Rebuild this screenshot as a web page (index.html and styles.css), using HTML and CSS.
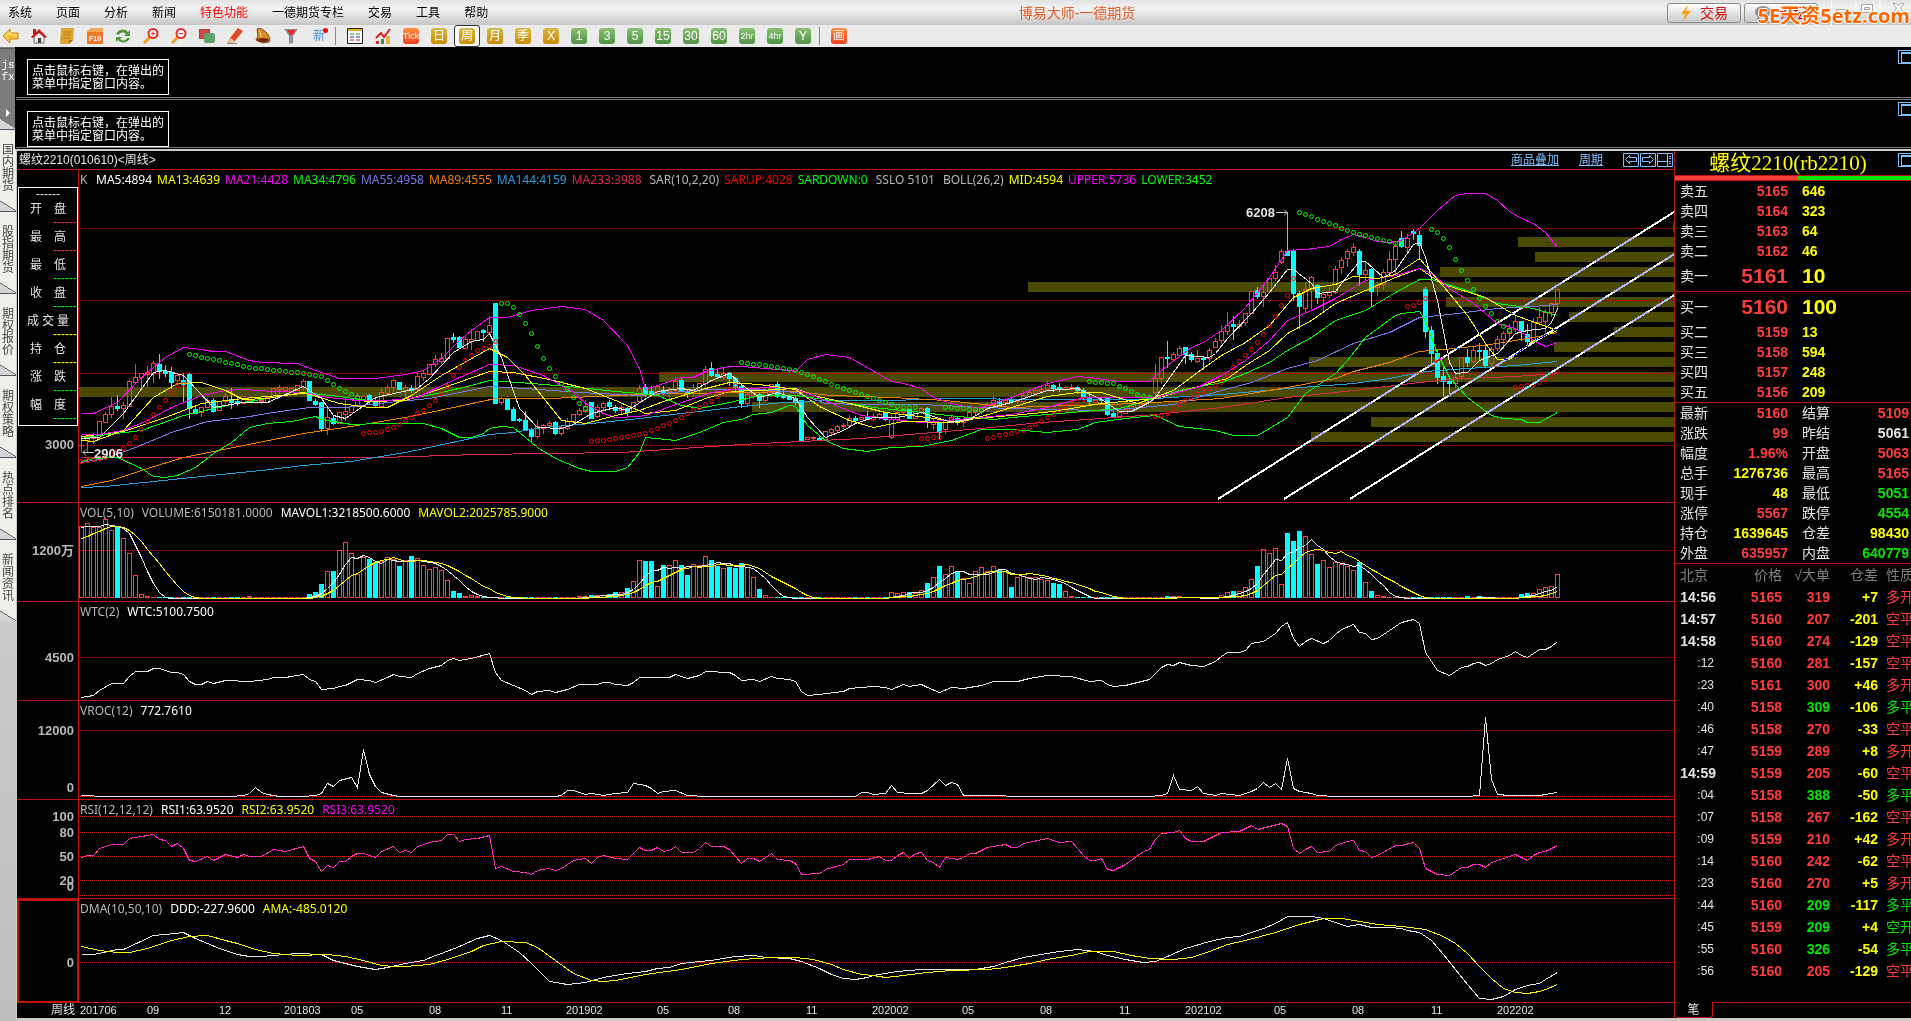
FILE: index.html
```html
<!DOCTYPE html>
<html lang="zh-CN">
<head>
<meta charset="utf-8">
<title>博易大师-一德期货</title>
<link rel="stylesheet" href="styles.css">
</head>
<body>
<header class="menubar">
  <nav class="menu">
    <a href="#">系统</a><a href="#">页面</a><a href="#">分析</a><a href="#">新闻</a><a href="#" class="hot">特色功能</a><a href="#">一德期货专栏</a><a href="#">交易</a><a href="#">工具</a><a href="#">帮助</a>
  </nav>
  <h1 class="app-title">博易大师-一德期货</h1>
  <div class="window-tools">
    <button class="pill"><svg width="12" height="16" viewBox="0 0 12 16"><path d="M8 0 1 9h4L3 16 11 6H6z" fill="#f8a020"/></svg>交易</button>
    <button class="pill"><svg width="16" height="14" viewBox="0 0 16 14"><ellipse cx="8" cy="6" rx="8" ry="6" fill="#8a8f94"/><path d="M3 9l-1 5 5-3z" fill="#8a8f94"/></svg>论坛</button>
    <svg class="win-icons" width="80" height="24" viewBox="0 0 80 24"><g fill="none" stroke="#fff"><path d="M.5 0v24M25 0v24M49 0v24"/></g><g fill="#fff" stroke="#a8a8a8"><path d="M5.500 8.500h11v3h-11z"/><path d="M30.500 3.500h11v8h-11z"/><path d="M33.500 6.500h5v2h-5z"/><path d="M62 2.500h3.500l2 2.500 2-2.500H73L69.500 7 73 12.500h-3.500l-2-3-2 3H62L65.500 7z"/></g></svg>
  </div>
  <div class="watermark">5E天资5etz.com</div>
</header>

<div class="toolbar" role="toolbar">
  <button aria-label="后退"><svg viewBox="0 0 16 16"><path d="M0 8 7 1v4h8v6H7v4z" fill="#f8c438" stroke="#c88a10"/><path d="M3 8l4-4v2.500h7" fill="none" stroke="#fff0a0"/></svg></button>
  <button aria-label="主页"><svg viewBox="0 0 16 16"><path d="M3 8v7h10V8L8 4z" fill="#e8e8ee" stroke="#777"/><path d="M0 9 8 1l8 8-2 1-6-5-6 5z" fill="#c01c1c"/><path d="M2 1h3v4L2 7z" fill="#b02020"/><path d="M7 10h3v5H7z" fill="#444"/></svg></button>
  <button aria-label="记事"><svg viewBox="0 0 16 16"><path d="M2 0h13l-1 12-4 4H1z" fill="#e0a430"/><path d="M10 16v-4h4z" fill="#a86a10"/><path d="M4 4h9M4 7h8M3 10h8" stroke="#b87814"/></svg></button>
  <button aria-label="F10资料"><svg viewBox="0 0 16 16"><rect y="3" width="16" height="13" rx="1" fill="#f07828"/><path d="M0 3 4 0h12v4H0z" fill="#f8a850"/><text x="2" y="13" class="ic-f10">F10</text></svg></button>
  <button aria-label="刷新"><svg viewBox="0 0 16 16"><path d="M1 6c2-5 9-6 12-2l2-2v6H9l2-2C9 4 5 4 4 7zM15 10c-2 5-9 6-12 2l-2 2V9h6l-2 2c2 2 6 2 7-1z" fill="#4c9c38"/></svg></button>
  <button aria-label="放大"><svg viewBox="0 0 16 16"><path d="M1 15l6-6" stroke="#f0a020" stroke-width="3"/><circle cx="10" cy="5.500" r="4.500" fill="#fff" stroke="#e03028" stroke-width="2"/><path d="M8 5.500h4M10 3.500v4" stroke="#e03028"/></svg></button>
  <button aria-label="缩小"><svg viewBox="0 0 16 16"><path d="M1 15l6-6" stroke="#f0a020" stroke-width="3"/><circle cx="10" cy="5.500" r="4.500" fill="#fff" stroke="#e03028" stroke-width="2"/><path d="M8 5.500h4" stroke="#e03028"/></svg></button>
  <button aria-label="叠加"><svg viewBox="0 0 16 16"><rect x=".5" y="1.500" width="10" height="9" fill="#d04848" stroke="#b04040"/><rect x="5.500" y="5.500" width="10" height="9" rx="1" fill="#58a868" stroke="#6a9a78"/></svg></button>
  <button aria-label="画笔"><svg viewBox="0 0 16 16"><path d="M11 0l5 3-8 10-5-3z" fill="#e04828"/><path d="M3 10l5 3-7 3z" fill="#f0c890" stroke="#a07040" stroke-width=".5"/><path d="M0 15.500h10" stroke="#888"/></svg></button>
  <button aria-label="预警"><svg viewBox="0 0 16 16"><path d="M2 1l3-1 6 4c2 2 2 4 4 6l-1 4-6 1-7-3 2-4z" fill="#d88c2c" stroke="#884410"/><ellipse cx="8" cy="12" rx="6" ry="2" fill="#702c0c"/><path d="M5 3l1 6" stroke="#ffd880"/></svg></button>
  <button aria-label="筛选"><svg viewBox="0 0 16 16"><path d="M1 1h14L10 8v7l-4 1V8z" fill="#909498"/><path d="M4 2h9l-4 5H7z" fill="#e82828"/></svg></button>
  <button aria-label="新"><span class="new-mark">新</span></button>
  <i class="sep"></i>
  <button aria-label="报价"><svg viewBox="0 0 16 16"><path d="M.5.500h15v15H.5z" fill="#fff" stroke="#222"/><path d="M1 2h14" stroke="#e8b020" stroke-width="2"/><path d="M3 6h4M9 6h4" stroke="#109020"/><path d="M3 9h4M9 9h4" stroke="#2030a0"/><path d="M3 12h4M9 12h4" stroke="#c02020"/></svg></button>
  <button aria-label="走势"><svg viewBox="0 0 16 16"><path d="M1 10 6 5l3 4 6-8" fill="none" stroke="#e02020" stroke-width="2"/><path d="M1 13h3v3H1z" fill="#d03030"/><path d="M6 11h3v5H6z" fill="#20a030"/><path d="M11 8h4v8h-4z" fill="#e8b040"/></svg></button>
  <button><b class="sq red narrow">Tick</b></button><button><b class="sq gold">日</b></button><button class="on"><b class="sq gold">周</b></button><button><b class="sq gold">月</b></button><button><b class="sq gold">季</b></button><button><b class="sq gold">X</b></button><button><b class="sq green">1</b></button><button><b class="sq green">3</b></button><button><b class="sq green">5</b></button><button><b class="sq green">15</b></button><button><b class="sq green">30</b></button><button><b class="sq green">60</b></button><button><b class="sq green narrow">2hr</b></button><button><b class="sq green narrow">4hr</b></button><button><b class="sq green">Y</b></button>
  <i class="sep"></i>
  <button><b class="sq red">画</b></button>
</div>

<div class="workspace">
  <aside class="side">
    <a href="#" class="tab dark"><span>js</span><span>fx</span><i class="play"></i></a>
    <a href="#" class="tab">国内期货</a>
    <a href="#" class="tab">股指期货</a>
    <a href="#" class="tab">期权报价</a>
    <a href="#" class="tab">期权策略</a>
    <a href="#" class="tab">热点排名</a>
    <a href="#" class="tab">新闻资讯</a>
  </aside>

  <main class="content">
    <section class="blank"><p>点击鼠标右键，在弹出的<br>菜单中指定窗口内容。</p><button class="max" aria-label="最大化"></button></section>
    <section class="blank second"><p>点击鼠标右键，在弹出的<br>菜单中指定窗口内容。</p><button class="max" aria-label="最大化"></button></section>

    <div class="desk">
      <section class="chart">
        <div class="chart-head">
          <h2>螺纹2210(010610)&lt;周线&gt;</h2>
          <a href="#">商品叠加</a><a href="#">周期</a>
          <div class="chart-nav">
            <button aria-label="左移"><svg width="16" height="14" viewBox="0 0 16 14"><path d="M.5.500h15v13H.5zM2.500 6.500l4-4v2h7v4h-7v2z"/></svg></button>
            <button aria-label="右移"><svg width="16" height="14" viewBox="0 0 16 14"><path d="M.5.500h15v13H.5zM13.500 6.500l-4-4v2h-7v4h7v2z"/></svg></button>
            <button aria-label="布局"><svg width="16" height="14" viewBox="0 0 16 14"><path d="M.5.500h15v13H.5zM.5 8.500h10M10.500 1v12M12 3.500h2M12 5.500h2M12 8.500h2M12 10.500h2"/></svg></button>
          </div>
        </div>

        <div class="pane pane-k">
          <div class="axis">
            <dl class="ohlc">
              <dt class="time">------</dt>
              <dt><span>开</span><span>盘</span></dt><dd class="r">------</dd>
              <dt><span>最</span><span>高</span></dt><dd class="r">------</dd>
              <dt><span>最</span><span>低</span></dt><dd class="g">------</dd>
              <dt><span>收</span><span>盘</span></dt><dd class="g">------</dd>
              <dt class="three"><span>成</span><span>交</span><span>量</span></dt><dd class="y">------</dd>
              <dt><span>持</span><span>仓</span></dt><dd class="y">------</dd>
              <dt><span>涨</span><span>跌</span></dt><dd class="g">------</dd>
              <dt><span>幅</span><span>度</span></dt><dd class="g">------</dd>
            </dl>
            <span class="lab" style="top:275px">3000</span>
          </div>
          <div class="plot">
            <svg id="k"></svg>
            <p class="legend"><span class="k">K</span><span class="w">MA5:4894</span><span class="y">MA13:4639</span><span class="m">MA21:4428</span><span class="g">MA34:4796</span><span class="b">MA55:4958</span><span class="o">MA89:4555</span><span class="s">MA144:4159</span><span class="c">MA233:3988</span><span class="n">SAR(10,2,20)</span><span class="rd">SARUP:4028</span><span class="g">SARDOWN:0</span><span class="n">SSLO 5101</span><span class="n">BOLL(26,2)</span><span class="y">MID:4594</span><span class="m">UPPER:5736</span><span class="g">LOWER:3452</span></p>
          </div>
        </div>
        <div class="pane">
          <div class="axis"><span class="lab" style="top:48px">1200万</span></div>
          <div class="plot"><svg id="vol"></svg><p class="legend sub"><span>VOL(5,10)</span><span>VOLUME:6150181.0000</span><span class="w">MAVOL1:3218500.6000</span><span class="y">MAVOL2:2025785.9000</span></p></div>
        </div>
        <div class="pane">
          <div class="axis"><span class="lab" style="top:56px">4500</span></div>
          <div class="plot"><svg id="wtc"></svg><p class="legend sub"><span>WTC(2)</span><span class="w">WTC:5100.7500</span></p></div>
        </div>
        <div class="pane">
          <div class="axis"><span class="lab" style="top:30px">12000</span><span class="lab" style="top:87px">0</span></div>
          <div class="plot"><svg id="vroc"></svg><p class="legend sub"><span>VROC(12)</span><span class="w">772.7610</span></p></div>
        </div>
        <div class="pane">
          <div class="axis"><span class="lab" style="top:17px">100</span><span class="lab" style="top:33px">80</span><span class="lab" style="top:57px">50</span><span class="lab" style="top:81px">20</span><span class="lab" style="top:87px">0</span></div>
          <div class="plot"><svg id="rsi"></svg><p class="legend sub"><span>RSI(12,12,12)</span><span class="w">RSI1:63.9520</span><span class="y">RSI2:63.9520</span><span class="m">RSI3:63.9520</span></p></div>
        </div>
        <div class="pane pane-dma">
          <div class="axis picked"><span class="lab" style="top:63px">0</span></div>
          <div class="plot"><svg id="dma"></svg><p class="legend sub"><span>DMA(10,50,10)</span><span class="w">DDD:-227.9600</span><span class="y">AMA:-485.0120</span></p></div>
        </div>
        <div class="dates"><span class="period">周线</span><svg id="dates"></svg></div>
      </section>

      <section class="quote">
        <h2>螺纹2210(rb2210)</h2>
        <button class="max" aria-label="最大化"></button>
        <div class="ratio"><i></i></div>
        <table class="book">
          <tr><th>卖五</th><td>5165</td><td>646</td></tr>
          <tr><th>卖四</th><td>5164</td><td>323</td></tr>
          <tr><th>卖三</th><td>5163</td><td>64</td></tr>
          <tr><th>卖二</th><td>5162</td><td>46</td></tr>
          <tr class="best"><th>卖一</th><td>5161</td><td>10</td></tr>
        </table>
        <table class="book">
          <tr class="best"><th>买一</th><td>5160</td><td>100</td></tr>
          <tr><th>买二</th><td>5159</td><td>13</td></tr>
          <tr><th>买三</th><td>5158</td><td>594</td></tr>
          <tr><th>买四</th><td>5157</td><td>248</td></tr>
          <tr><th>买五</th><td>5156</td><td>209</td></tr>
        </table>
        <table class="stats">
          <tr><th>最新</th><td class="r">5160</td><th>结算</th><td class="r">5109</td></tr>
          <tr><th>涨跌</th><td class="r">99</td><th>昨结</th><td class="w">5061</td></tr>
          <tr><th>幅度</th><td class="r">1.96%</td><th>开盘</th><td class="r">5063</td></tr>
          <tr><th>总手</th><td class="y">1276736</td><th>最高</th><td class="r">5165</td></tr>
          <tr><th>现手</th><td class="y">48</td><th>最低</th><td class="g">5051</td></tr>
          <tr><th>涨停</th><td class="r">5567</td><th>跌停</th><td class="g">4554</td></tr>
          <tr><th>持仓</th><td class="y">1639645</td><th>仓差</th><td class="y">98430</td></tr>
          <tr><th>外盘</th><td class="r">635957</td><th>内盘</th><td class="g">640779</td></tr>
        </table>
        <table class="ticks">
          <thead><tr><th>北京</th><th>价格</th><th>√大单</th><th>仓差</th><th>性质</th></tr></thead>
          <tbody>
            <tr><td>14:56</td><td>5165</td><td>319</td><td>+7</td><td>多开</td></tr>
            <tr><td>14:57</td><td>5160</td><td>207</td><td>-201</td><td>空平</td></tr>
            <tr><td>14:58</td><td>5160</td><td>274</td><td>-129</td><td>空平</td></tr>
            <tr class="sec"><td>:12</td><td>5160</td><td>281</td><td>-157</td><td>空平</td></tr>
            <tr class="sec"><td>:23</td><td>5161</td><td>300</td><td>+46</td><td>多开</td></tr>
            <tr class="sec sell"><td>:40</td><td>5158</td><td>309</td><td>-106</td><td>多平</td></tr>
            <tr class="sec"><td>:46</td><td>5158</td><td>270</td><td>-33</td><td>空平</td></tr>
            <tr class="sec"><td>:47</td><td>5159</td><td>289</td><td>+8</td><td>多开</td></tr>
            <tr><td>14:59</td><td>5159</td><td>205</td><td>-60</td><td>空平</td></tr>
            <tr class="sec sell"><td>:04</td><td>5158</td><td>388</td><td>-50</td><td>多平</td></tr>
            <tr class="sec"><td>:07</td><td>5158</td><td>267</td><td>-162</td><td>空平</td></tr>
            <tr class="sec"><td>:09</td><td>5159</td><td>210</td><td>+42</td><td>多开</td></tr>
            <tr class="sec"><td>:14</td><td>5160</td><td>242</td><td>-62</td><td>空平</td></tr>
            <tr class="sec"><td>:23</td><td>5160</td><td>270</td><td>+5</td><td>多开</td></tr>
            <tr class="sec sell"><td>:44</td><td>5160</td><td>209</td><td>-117</td><td>多平</td></tr>
            <tr class="sec sell"><td>:45</td><td>5159</td><td>209</td><td>+4</td><td>空开</td></tr>
            <tr class="sec sell"><td>:55</td><td>5160</td><td>326</td><td>-54</td><td>多平</td></tr>
            <tr class="sec"><td>:56</td><td>5160</td><td>205</td><td>-129</td><td>空平</td></tr>
          </tbody>
        </table>
        <div class="foot"><button>笔</button><i></i></div>
      </section>
    </div>
  </main>
</div>
<script src="chart.js"></script>
</body>
</html>
```
FILE: styles.css
```css
* { box-sizing: border-box; }

:root {
  --line: #c01408;
  --red: #ff3c3c;
  --green: #00e600;
  --yellow: #ffff00;
  --blue: #80c0ff;
}

body {
  margin: 0;
  min-height: 100vh;
  display: flex;
  flex-direction: column;
  background: #cfc9c7;
  color: #e4e4e4;
  font: 12px/16px "Liberation Sans", "Noto Sans CJK SC", sans-serif;
  overflow: hidden;
}

h1, h2, p, dl, dt, dd { margin: 0; font-weight: normal; }
button { margin: 0; padding: 0; border: 0; background: none; color: inherit; font: inherit; }
a { color: inherit; text-decoration: none; }
svg { display: block; }
table { width: 100%; table-layout: fixed; border-collapse: collapse; }
th, td { padding: 0; font-weight: normal; text-align: right; white-space: nowrap; }

.r { color: var(--red); }
.g { color: #00ff00; }
.y { color: var(--yellow); }
.w { color: #fff; }
.m { color: #ff00ff; }
.b { color: #7878f0; }
.o { color: #f08000; }
.s { color: #28a0dc; }
.c { color: #dc2850; }
.rd { color: #f00000; }

/* menu bar */
.menubar {
  position: relative;
  display: grid;
  grid-template-columns: 1fr auto 1fr;
  align-items: center;
  height: 25px;
  background: linear-gradient(#e2e2e2, #f4f4f4 35%, #c6c6c6);
  color: #000;
}
.menu { display: flex; gap: 24px; padding-left: 8px; }
.menu .hot { color: #f00; }
.app-title { font-size: 14px; color: #e0602c; padding-left: 243px; }
.window-tools { display: flex; gap: 3px; justify-content: flex-end; align-items: center; }
.pill {
  display: flex;
  align-items: center;
  justify-content: center;
  gap: 8px;
  width: 74px;
  height: 20px;
  border: 1px solid #8c8c8c;
  border-radius: 3px;
  background: linear-gradient(#fff, #c8c8c8);
  color: #d80808;
  font-size: 14px;
}
.win-icons { margin-left: 10px; }
.watermark {
  position: absolute;
  right: 1px;
  top: 3px;
  color: #ff6600;
  font: bold 20px/26px "Open Sans", "Noto Sans CJK SC", sans-serif;
  text-shadow: 1px 0 #fff, -1px 0 #fff, 0 1px #fff, 0 -1px #fff;
}

/* toolbar */
.toolbar {
  display: flex;
  align-items: center;
  height: 23px;
  background: #ebebeb;
  border-bottom: 1px solid #7c7c7c;
}
.toolbar button { width: 28px; height: 22px; display: flex; justify-content: center; align-items: center; }
.toolbar button:first-child { width: 25px; padding-right: 3px; }
.toolbar svg { width: 16px; height: 16px; }
.toolbar .on { width: 26px; margin: 0 1px; border: 1px solid #333; border-radius: 3px; background: #fafafa; }
.ic-f10 { font: bold 7px/8px "Liberation Sans", sans-serif; fill: #fff; }
.sep { width: 8px; height: 18px; background: linear-gradient(90deg, transparent 2px, #888 2px, #888 3px, transparent 3px); }
.sq {
  width: 16px;
  height: 16px;
  border-radius: 3px;
  color: #fff;
  font: 12px/16px "Liberation Sans", "Noto Sans CJK SC", sans-serif;
  text-align: center;
}
.sq.narrow { font-size: 9px; }
.gold { background: linear-gradient(#d8b84c, #c88c00); }
.green { background: linear-gradient(#88c070, #509448); }
.red { background: linear-gradient(#ff9040, #f04020); }
.new-mark { position: relative; color: #4090e0; }
.new-mark::after { content: ""; position: absolute; top: 0; right: -3px; width: 5px; height: 5px; border-radius: 50%; background: #f00; }

/* workspace */
.workspace { display: flex; flex: 1; }
.side { width: 16px; flex: none; background: linear-gradient(#dcdcdc, #bebebe); }
.tab {
  position: relative;
  display: block;
  height: 82px;
  padding: 14px 2px 0;
  font-size: 12px;
  line-height: 12px;
  color: #444;
  word-break: break-all;
  border-top: 1px solid #555;
  background: linear-gradient(to top right, #d4d4d8 48%, #666 49%, #666 53%, #f0f0ea 54%) bottom / 16px 10px no-repeat, linear-gradient(#f0f0ea, #f0f0ea) top / 16px 72px no-repeat;
}
.tab.dark {
  height: 81px;
  padding: 10px 0 0;
  color: #fff;
  font-family: "Liberation Mono", monospace;
  font-size: 11px;
  text-align: center;
  background: linear-gradient(to top right, #d4d4d8 49%, #7c7c7c 50%) bottom / 16px 10px no-repeat, linear-gradient(#7c7c7c, #7c7c7c) top / 16px 71px no-repeat;
}
.tab span { display: block; }
.play { display: block; width: 0; margin: 26px 0 0 6px; border: 4px solid transparent; border-left-color: #fff; border-right: 0; }

.content { flex: 1; min-width: 0; display: flex; flex-direction: column; }
.blank {
  position: relative;
  height: 50px;
  padding: 11px;
  background: #000;
  border-bottom: 1px solid #7c7c7c;
  outline: 1px solid #000;
  overflow: hidden;
}
.blank.second { height: 49px; margin-top: 1px; border-top: 1px solid #7c7c7c; }
.blank p {
  width: 142px;
  height: 36px;
  padding: 5px 4px 0;
  border: 1px solid #fff;
  line-height: 13px;
  color: #fff;
  white-space: nowrap;
}
.max { position: absolute; top: 2px; right: -2px; width: 15px; height: 14px; border: 1px solid var(--blue); }
.max::after { content: ""; display: block; width: 10px; height: 8px; margin-left: 2px; border: 1px solid var(--blue); border-top-width: 2px; }

.desk { display: grid; grid-template-columns: minmax(0, 1fr) 237px; margin-top: 1px; border-top: 2px solid #cfc9c7; background: #000; }
.chart { border-left: 1px solid #cfc9c7; min-width: 0; }
.chart-head { display: flex; align-items: center; height: 19px; padding-left: 2px; border-bottom: 1px solid var(--line); }
.chart-head h2 { flex: 1; font-size: 12px; }
.chart-head a { margin-right: 20px; color: var(--blue); text-decoration: underline; }
.chart-nav { display: flex; gap: 1px; margin-right: 1px; }
.chart-nav path { fill: none; stroke: var(--blue); }

.pane { display: grid; grid-template-columns: 62px minmax(0, 1fr); height: 99px; border-bottom: 1px solid var(--line); }
.pane-k { height: 333px; }
.pane-dma { height: 104px; }
.axis { position: relative; border-right: 1px solid var(--line); }
.axis.picked { border: 2px solid var(--line); border-bottom-width: 1px; }
.lab { position: absolute; right: 4px; margin-top: -8px; font-size: 13px; font-weight: bold; color: #b8b8b8; }
.picked .lab { right: 3px; margin-top: -9px; }
.plot { position: relative; overflow: hidden; }
.plot svg { width: 100%; height: 100%; }
.legend {
  position: absolute;
  left: 1px;
  top: 2px;
  display: flex;
  gap: 5px;
  font-family: "Noto Sans", sans-serif;
  color: #b8b8b8;
  white-space: nowrap;
}
.legend.sub { gap: 8px; }
.legend .k { width: 11px; }
.legend .n { margin-left: 3px; }

.ohlc { margin: 17px 0 0 1px; width: 60px; height: 239px; border: 1px solid #fff; }
.ohlc dt { display: flex; justify-content: space-between; width: 36px; height: 18px; margin-left: 11px; line-height: 16px; }
.ohlc dt.three { width: 42px; margin-left: 8px; }
.ohlc dt.time { display: block; width: auto; height: 13px; margin: 0; line-height: 13px; text-align: center; }
.ohlc dd { height: 10px; line-height: 6px; text-align: right; }

.dates { display: grid; grid-template-columns: 62px minmax(0, 1fr); height: 15px; line-height: 14px; }
.period { padding-right: 4px; text-align: right; }
.dates svg { width: 100%; height: 15px; }
.dates text { font: 11px "Liberation Sans", sans-serif; fill: #e4e4e4; }

.note { font: bold 13px "Liberation Sans", sans-serif; fill: #e4e4e4; }
.crisp { shape-rendering: crispEdges; }
.channel { mix-blend-mode: difference; stroke: #fff; stroke-width: 2; fill: none; shape-rendering: crispEdges; }

/* quote column */
.quote { position: relative; display: flex; flex-direction: column; border-left: 1px solid var(--line); overflow: hidden; }
.quote h2 { height: 24px; padding-right: 10px; text-align: center; color: var(--yellow); font: 21px/24px "Liberation Serif", "Noto Sans CJK SC", serif; }
.ratio { height: 6px; border: 1px solid var(--line); border-width: 1px 0; background: #00e600; }
.ratio i { display: block; width: 52%; height: 4px; background: var(--red); }
.book, .stats { border-bottom: 1px solid var(--line); border-collapse: separate; border-spacing: 0; }
.book tr, .stats tr { height: 20px; line-height: 20px; }
.book tr.best { height: 30px; }
.quote th { text-align: left; font-size: 14px; padding-left: 5px; }
.quote td { font-size: 14px; font-weight: bold; color: var(--red); }
.quote td.y { color: var(--yellow); }
.quote td.g { color: var(--green); }
.quote td.w { color: #e4e4e4; }
.book th, .stats th:first-child { width: 38px; }
.book td:nth-child(2), .stats td:nth-child(2) { width: 75px; }
.book td:nth-child(3) { text-align: left; padding-left: 14px; color: var(--yellow); }
.book .best td { font-size: 21px; }
.stats th:nth-child(3) { width: 56px; padding-left: 14px; }
.stats td:nth-child(4) { padding-right: 2px; }
.ticks tr { height: 22px; line-height: 22px; }
.ticks th { color: #808080; text-align: right; padding: 0; }
.ticks th:first-child { width: 41px; text-align: left; padding-left: 5px; }
.ticks th:nth-child(2) { width: 66px; }
.ticks th:nth-child(3), .ticks th:nth-child(4) { width: 48px; }
.ticks th:nth-child(5), .ticks td:nth-child(5) { text-align: left; padding-left: 8px; font-weight: normal; }
.ticks td:first-child { color: #e4e4e4; }
.ticks .sec td:first-child { font-size: 12px; font-weight: normal; padding-right: 2px; }
.ticks .sell td:nth-child(3), .ticks .sell td:nth-child(5) { color: var(--green); }
.ticks td:nth-child(4) { color: var(--yellow); }
.foot { display: flex; height: 16px; margin-top: auto; }
.foot button { width: 38px; height: 16px; border: 1px solid var(--line); border-width: 0 1px 1px 0; border-radius: 0 0 3px 3px; color: #e4e4e4; line-height: 14px; }
.foot i { flex: 1; border-top: 1px solid var(--line); }
```
FILE: chart.js
```js
const NS = 'http://www.w3.org/2000/svg';
const STEP = 6;
const px = i => 81.5 + STEP * i;
const RED = '#ff3c3c', CYAN = '#00ffff', WHITE = '#e8e8e8', YELLOW = '#ffff00';

// Every pane draws in shared chart coordinates, shifted to its own top edge.
function pane(id, top) {
  const g = document.createElementNS(NS, 'g');
  g.setAttribute('transform', `translate(-79,${-top})`);
  document.getElementById(id).append(g);
  return g;
}
function add(g, tag, attrs, text) {
  const e = document.createElementNS(NS, tag);
  for (const k in attrs) e.setAttribute(k, attrs[k]);
  if (text) e.textContent = text;
  g.append(e);
  return e;
}
const parse = s => s.trim().split(/\s+/).map(p => p.split(',').map(Number));
function line(g, color, data, extra) {
  const pts = parse(data).map(([i, y]) => `${px(i)},${y + .5}`).join(' ');
  add(g, 'polyline', Object.assign({ points: pts, fill: 'none', stroke: color, class: 'crisp' }, extra));
}
function grid(g, color, ys) {
  ys.forEach(y => add(g, 'path', { d: `M80 ${y}.5H4000`, stroke: color, 'stroke-dasharray': '1 1', class: 'crisp' }));
}

// kind, body top, body bottom, high, low
const candles = `r,445,445,435,452 r,436,440,436,451 r,436,438,433,443 r,421,438 r,414,422,412,422 r,406,414,397,417 c,406,408,395,410 r,405,408,402,418
r,381,406,380,406 r,377,382,364,382 r,373,377,373,387 r,372,374,366,387 r,363,373,361,382 c,364,371,354,378 c,371,373,365,376 c,372,382,367,388
r,375,380,373,385 c,380,384,373,402 c,374,408,373,418 c,409,413,405,413 r,407,412,407,416 r,400,407,398,407 c,400,411,398,412 r,401,410
r,396,401,393,403 c,399,402,388,408 c,401,403,397,405 r,396,403 r,397,400 r,400,402 r,400,401,398,403 r,397,402 r,388,397 r,387,389,385,395
r,387,390 r,388,391 r,385,390 r,381,387,379,390 c,381,400 c,401,404,399,405 c,402,428,402,431 r,417,428,408,434 c,418,423,416,424 r,412,423
r,411,414,398,420 r,406,412 r,396,406,393,406 r,396,399 c,395,400,394,403 c,400,405,398,407 r,392,406,388,407 r,387,393,385,395 r,380,387,379,392
c,382,389 r,387,390,385,397 c,388,390,385,392 r,376,389,373,390 r,373,377,371,380 r,364,374 r,359,364,355,366 r,358,361,353,363 r,338,358
c,337,339,333,342 c,337,347,336,348 r,339,348,337,348 r,339,341,329,349 r,331,340 c,330,332,329,341 r,325,332,316,334 c,303,403 r,398,402,397,404
c,399,409 c,409,420,407,420 c,419,420,418,421 c,420,429,411,430 c,429,436,428,441 r,426,436,420,438 r,425,428,424,433 r,423,425,421,427
c,422,433,421,434 r,427,433,425,435 r,421,428,418,429 r,414,421 r,410,414,408,415 r,406,411,400,412 c,402,418 r,407,416,405,417 r,403,407,402,410
c,402,406,400,407 c,408,410,405,412 r,407,410,405,413 c,408,412,407,416 r,402,411 r,388,401,385,402 c,387,393,384,396 c,391,393,386,394 r,386,391
c,390,392,386,394 r,389,391,387,398 r,381,390,377,391 c,380,391,378,391 c,391,393,389,397 r,389,393,384,396 r,383,390,383,395 r,369,383,366,386
c,368,375,362,376 c,374,376,368,377 r,373,377,367,379 c,373,378,372,385 c,378,387,377,390 c,386,403,384,407 r,394,403,393,406 r,392,395,390,398
c,394,400,392,407 r,390,400,388,401 r,384,392 c,384,396,382,397 c,395,397,388,398 c,396,399,394,399 c,398,402,396,404 c,400,440 r,437,439
r,437,438,436,439 c,438,439,435,439 r,431,439 r,429,432,428,434 r,426,430,425,432 r,425,426,423,428 r,418,425,415,425 c,418,420,416,423 r,417,419
c,417,419,411,419 r,416,419,413,420 r,414,417,413,419 c,413,419,412,420 r,419,437,415,438 r,412,419,410,420 r,409,412,408,413 c,409,418 r,411,418
r,408,412,407,413 c,408,420,407,427 r,421,424,418,429 c,423,432,423,438 r,420,429,419,433 r,417,420,415,421 c,418,422,417,424 r,419,422,418,426
r,412,419 r,410,412,409,415 r,408,411,406,413 r,404,408,402,411 r,400,404,396,407 c,401,403,398,405 r,400,402,398,404 c,399,401,398,403 r,400,401,399,407
r,395,401,391,402 r,392,396,389,397 r,390,393,387,395 r,389,391,386,393 r,385,389,381,389 c,385,388,384,391 c,387,388,383,391 r,387,389,386,390 r,387,389,384,390
c,387,390,386,393 c,390,397,388,398 c,397,401,395,403 r,400,402 c,399,400,398,402 c,398,414,397,415 c,413,416,411,416 r,412,416,411,417 r,409,413
r,406,410,403,410 r,403,407 r,401,404 r,399,401,395,402 r,378,392,364,397 r,357,378,357,383 c,357,358,341,367 r,354,359,352,360 r,348,355,346,356
c,347,354,347,363 c,354,359,352,361 r,358,361,350,362 c,358,359,357,369 r,350,358,348,361 r,341,347,338,347 r,331,340,325,343 r,325,331,312,334
c,324,326,316,339 r,324,326,320,328 r,313,322,313,325 r,291,313 c,290,296,287,298 r,292,296,286,306 r,278,291 r,272,278,265,280 r,251,262,249,263
c,251,255,212,255 c,251,293,249,300 c,293,306,291,328 r,289,308,282,311 r,277,289,276,308 c,285,297,284,303 r,294,297,293,312 r,291,295,287,297
r,269,292,266,293 r,260,267,257,273 r,251,258,249,266 r,247,252,243,255 c,251,274,249,285 r,270,274,262,280 c,269,291,268,305 r,285,287,282,295
r,272,284,269,289 r,259,272,251,275 r,246,259,243,275 c,238,246,231,247 r,238,247,234,252 c,231,233,229,239 c,235,245,231,259 c,289,331,287,337
c,330,353,326,362 c,353,377,350,383 c,376,381,367,396 c,381,383,378,396 r,377,383,373,387 r,357,376,357,379 c,357,362,349,366 r,350,361,346,363
c,350,351,343,360 c,350,365,344,367 r,349,363,347,366 r,339,348,336,350 r,333,339,331,348 r,328,333,324,338 r,321,329,315,331 c,321,331,321,340
c,334,341,324,346 r,322,340,318,342 r,317,322,307,324 r,312,321,309,334 r,303,312,303,316 r,289,303,289,307`.trim().split(/\s+/).map(s => {
  const [kind, ...n] = s.split(',');
  const [top, bottom, high = top, low = bottom] = n.map(Number);
  return { up: kind === 'r', top, bottom, high, low };
});

const k = pane('k', 170);
[[1673, 222], [1518, 237], [1535, 252], [1440, 267], [1028, 282], [1446, 297], [1569, 312], [1614, 327], [1554, 342], [1309, 357], [659, 372], [79, 387], [752, 402], [1371, 417], [1311, 432]]
  .forEach(([x, y]) => add(k, 'rect', { x, y, width: 3000, height: 10, fill: '#4a4a00' }));
grid(k, '#a00000', [228, 300, 373, 445]);

candles.forEach((c, i) => {
  const x = px(i), color = c.up ? RED : CYAN;
  if (c.up) {
    add(k, 'path', { d: `M${x} ${c.high}V${c.top}M${x} ${c.bottom}V${c.low + 1}`, stroke: color, class: 'crisp' });
    add(k, 'rect', { x: x - 2, y: c.top + .5, width: 4, height: Math.max(c.bottom - c.top, 0) || .1, fill: 'none', stroke: color, class: 'crisp' });
  } else {
    add(k, 'path', { d: `M${x} ${c.high}V${c.low + 1}`, stroke: color, class: 'crisp' });
    add(k, 'rect', { x: x - 2.5, y: c.top, width: 5, height: c.bottom - c.top + 1, fill: color, class: 'crisp' });
  }
});

// MA233, MA144, MA89, MA55
line(k, '#dc2850', '0,457 17,457 34,457 50,457 66,454 78,453 90,452 100,448 110,444 120,441 130,438 140,433 150,428 160,422 170,418 179,414 190,407 201,397 212,390 223,382 230,378 239,376 246,373');
line(k, '#28a0dc', '0,487 4,486 12,481 20,476 30,470 37,465 45,461 54,452 61,443 68,434 72,432 77,427 85,423 93,418 100,413 110,406 117,402 124,400 135,400 145,398 160,399 176,399 190,394 201,388 212,383 218,378 224,371 231,368 239,365 246,361');
line(k, '#f08000', '0,486 5,480 11,468 17,457 27,445 37,433 46,425 54,417 62,407 69,398 78,398 93,394 100,393 110,392 119,391 125,395 135,397 144,400 155,407 165,405 176,403 190,398 201,387 209,378 212,371 218,362 223,351 229,348 236,343 242,337 246,332');
line(k, '#7878f0', '0,462 4,458 9,447 15,432 21,421 27,417 32,412 38,407 44,407 51,402 58,398 63,392 68,386 74,388 83,392 93,395 104,389 113,389 119,392 124,403 130,404 140,404 150,407 161,409 171,410 182,404 190,390 195,382 201,368 206,360 212,343 218,332 223,317 228,314 236,308 242,306 246,304');
// MA34, BOLL middle band, MA21, MA13, MA5
line(k, '#00ff00', '0,438 3,435 10,430 17,415 25,404 32,397 37,392 43,396 49,401 55,398 60,392 65,385 68,380 75,383 83,387 89,391 93,393 96,395 100,405 103,408 108,402 113,395 119,395 125,400 132,407 140,412 146,416 152,419 157,416 165,412 173,408 176,403 183,390 190,382 194,373 198,362 201,350 205,337 209,320 214,310 219,292 223,279 225,279 231,290 236,303 242,308 246,315');
line(k, YELLOW, '0,436 7,431 14,417 20,403 27,398 37,393 41,397 48,401 54,400 60,388 68,371 72,372 78,379 84,388 89,400 94,413 99,410 104,398 108,391 113,390 119,388 122,395 128,403 134,412 141,417 146,422 149,418 155,415 162,411 170,403 179,398 185,388 191,378 194,365 198,350 201,333 205,320 209,303 214,290 219,277 223,268 227,284 234,297 239,315 246,330');
line(k, '#ff00ff', '0,434 3,434 7,430 11,420 15,407 20,395 24,390 27,389 32,391 37,392 41,397 46,400 51,400 56,397 59,388 63,377 68,364 72,365 77,375 82,392 84,403 87,413 89,417 93,416 94,415 100,402 105,392 110,388 116,387 119,389 122,395 127,408 130,415 135,419 140,422 144,420 150,417 155,414 161,407 167,397 173,397 179,397 186,387 190,375 194,360 198,340 201,320 205,310 209,298 214,280 219,275 223,268 225,273 228,288 232,303 236,323 239,328 242,340 244,346 246,342');
line(k, YELLOW, '0,440 2,441 7,430 12,397 16,383 20,382 24,390 27,399 31,398 37,392 43,403 48,407 51,407 55,395 60,375 68,348 71,357 74,375 80,420 84,423 89,415 93,410 97,401 104,388 108,382 113,384 119,389 123,406 128,420 132,427 137,421 145,422 150,416 155,407 161,396 166,392 170,392 176,403 182,390 186,372 190,355 194,342 198,325 202,297 205,288 209,284 212,276 216,278 219,274 223,258 225,272 228,293 231,315 234,343 236,359 238,359 242,340 246,330');
line(k, WHITE, '0,438 3,437 7,413 12,372 14,370 17,375 22,407 27,402 31,402 37,386 40,398 42,415 44,418 49,397 56,388 58,378 62,352 65,341 67,339 68,333 70,357 73,408 76,427 80,428 82,424 85,413 89,407 91,410 96,391 100,388 102,390 105,380 108,373 110,384 113,397 116,392 119,398 121,417 124,437 127,430 129,423 132,417 136,417 140,412 143,418 145,422 148,419 151,408 155,402 161,390 166,388 170,399 173,411 175,411 178,402 179,397 184,355 188,357 189,353 191,338 195,313 198,292 201,269 202,269 205,283 206,293 209,291 210,283 213,261 214,261 217,277 219,270 222,244 223,242 224,257 226,300 228,362 229,373 231,372 233,360 236,353 239,333 241,330 244,328 245,322 246,308');
// BOLL upper and lower bands
line(k, '#ff00ff', '0,413 2,413 6,402 10,377 14,357 17,347 20,349 22,351 24,351 28,360 30,362 36,363 39,370 43,378 49,378 54,374 57,370 60,358 63,340 65,330 68,317 71,317 75,310 80,306 84,309 87,320 91,345 93,368 94,389 97,383 100,377 102,377 104,371 108,366 110,366 114,368 118,370 119,371 121,359 124,354 128,357 131,367 135,381 137,383 140,388 142,397 145,403 148,407 150,407 155,397 161,383 166,376 168,377 173,381 178,381 181,365 185,347 187,342 190,330 194,307 198,277 201,250 204,249 208,246 210,239 212,234 214,237 216,241 218,242 220,240 223,228 226,210 229,195 231,193 234,193 236,200 238,211 240,218 242,223 244,232 246,247');
line(k, '#00ff00', '0,461 2,458 6,457 10,468 12,476 14,477 16,475 19,467 22,453 25,442 28,427 31,423 35,421 39,416 40,419 45,424 50,423 57,423 60,428 63,437 65,437 67,433 68,428 70,426 72,427 74,437 76,447 79,458 83,468 85,471 89,471 91,467 93,452 94,437 99,440 103,432 107,422 110,419 112,414 115,412 118,405 119,406 121,425 124,440 127,448 131,451 135,447 140,446 145,440 150,429 155,429 161,432 166,429 169,422 174,418 179,415 183,426 189,430 192,435 196,435 198,428 201,417 204,393 209,373 211,360 214,337 219,315 220,313 223,311 224,320 226,353 228,377 231,397 235,415 237,418 240,419 241,422 243,422 246,412');

// Parabolic SAR: one dot per bar along each run
function dots(color, data) {
  const p = parse(data);
  for (let n = 0, i = p[0][0]; i <= p[p.length - 1][0]; i++) {
    while (n < p.length - 2 && i > p[n + 1][0]) n++;
    const [a, ya] = p[n], [b, yb] = p[n + 1];
    add(k, 'circle', { cx: px(i), cy: Math.round(ya + (yb - ya) * (i - a) / (b - a)) + .5, r: 2, fill: 'none', stroke: color });
  }
}
['0,461 4,457 7,448 9,437 11,421 13,407 15,392 16,385 17,384',
 '47,433 50,431 52,427 54,420 57,410 59,400 61,386 62,375 63,367 64,360 66,350 68,346 69,341',
 '85,441 89,438 90,437 94,433 99,420 102,410 105,401 106,396 108,389 109,385',
 '140,438 143,437',
 '151,438 154,434 157,430 159,424 161,417 163,410 165,402 167,399',
 '179,416 181,413 184,400 187,391 190,382 192,367 194,355 196,342 197,334 198,325 199,316 200,305 201,295 202,278',
 '221,306 222,305 223,302 224,298',
 '239,387 241,385 243,382 245,376 246,371'].forEach(s => dots('#ff0000', s));
['18,354 22,359 28,367 34,371 37,373 40,376 42,384 44,391 46,397',
 '70,303 71,303 72,307 73,314 74,323 75,333 76,346 77,358 78,368 79,376 81,389 82,397 83,403 84,408',
 '110,362 115,366 119,370 122,376 125,384 130,394 135,404 137,407 139,407',
 '144,407 147,408 150,410',
 '168,381 172,383 174,388 176,394 178,397',
 '203,212 208,223 212,232 216,238 219,243 220,243',
 '225,229 226,232 227,238 228,247 229,259 230,270 231,280 232,289 233,298 234,306 235,313 236,321 237,326 238,330'].forEach(s => dots('#00ff00', s));

add(k, 'path', { d: 'M1218 499L2130 -75M1284 499L2065 9M1350 499L1999 91', class: 'channel' });
add(k, 'text', { x: 1246, y: 217, class: 'note' }, '6208');
add(k, 'path', { d: 'M1276 212.500h11m-3 -3l3 3l-3 3', fill: 'none', stroke: '#ccc' });
add(k, 'text', { x: 94, y: 458, class: 'note' }, '2906');
add(k, 'path', { d: 'M94 452.500h-11m3 -3l-3 3l3 3', fill: 'none', stroke: '#ccc' });

// Volume: bar tops, anything not listed sits on the base line
const BASE = 598;
const tops = candles.map(() => 597);
parse(`0,526 1,523 2,527 3,527 4,519 5,530 6,527 7,538 8,553 9,575 10,594 11,596 28,596 38,594 39,592 40,584 41,571 42,571 43,550 44,542 45,553 46,574 47,557 48,559 49,562 50,561 51,557 52,559 53,566 54,560 55,556 56,558 57,565 58,569 59,567 60,570 61,580 62,591 63,593 64,596 65,595 66,596 83,596 84,596 85,595 86,595 87,595 88,594 89,592 90,592 91,588 92,581
93,560 94,561 95,561 96,586 97,565 98,565 99,560 100,565 101,575 102,564 103,565 104,556 105,560 106,566 107,568 108,567 109,568 110,563 111,567 112,577 113,589 114,595 135,592 136,593 137,592 138,592 139,593 140,590 141,583 142,577 143,566 144,574 145,566 146,571 147,578 148,583 149,571 150,567 151,571 152,566 153,570 154,571 155,587 156,577 157,576 158,577 159,577 160,579 161,580 162,583 163,584 164,591 165,596
181,596 182,596 183,596 190,595 191,592 192,591 193,591 194,587 195,579 196,566 197,549 198,553 199,548 200,584 201,533 202,541 203,531 204,536 205,554 206,564 207,560 208,567 209,562 210,564 211,566 212,570 213,562 214,582 215,591 216,595 217,596 231,596 233,596 240,594 241,593 242,593 243,589 244,587 245,586 246,574`).forEach(([i, y]) => { tops[i] = y; });

const v = pane('vol', 503);
grid(v, '#a00000', [550]);
tops.forEach((y, i) => {
  if (candles[i].up) add(v, 'rect', { x: px(i) - 2, y: y + .5, width: 4, height: Math.max(BASE - y - 1, .1), fill: 'none', stroke: RED, class: 'crisp' });
  else add(v, 'rect', { x: px(i) - 2.5, y, width: 5, height: BASE - y, fill: CYAN, class: 'crisp' });
});
const lead = [550, 550, 550, 550, 550, 527, 527, 527, 527];
const series = lead.concat(tops.map(y => y === 597 ? 598 : y));
const average = n => tops.map((_, i) => {
  const end = i + lead.length + 1;
  return `${i},${Math.round(series.slice(end - n, end).reduce((a, b) => a + b) / n)}`;
}).join(' ');
line(v, WHITE, average(5));
line(v, YELLOW, average(10));

const wtc = pane('wtc', 602);
grid(wtc, '#a00000', [657]);
line(wtc, WHITE, '0,697 2,695 3,690 5,683 7,683 8,676 9,671 11,671 12,668 13,668 15,672 16,672 17,674 18,681 19,684 20,684 21,681 22,683 24,680 28,681 31,679 32,677 34,677 37,674 38,679 39,681 40,689 42,688 43,686 44,685 46,679 48,680 49,682 51,677 52,674 53,676 55,677 56,673 58,668 60,665 61,660 62,658 63,660 65,658 68,653 69,672 70,680 72,685 74,690 75,694 76,691 78,690 79,692 81,689 83,684 86,684 87,682 88,682 89,684 91,685 92,682 93,677 95,677 98,677 99,674 101,678 103,675 104,671 108,672 109,675 110,680 112,679 113,681 115,676 116,678 118,679 119,681 120,691 121,695 123,694 127,691 128,688 132,686 134,687 135,689 137,684 138,686 140,684 141,687 143,692 145,687 147,688 150,685 152,681 156,681 158,678 161,675 165,676 168,681 170,680 171,684 172,686 174,685 176,682 178,679 180,667 181,664 182,665 183,662 185,665 187,666 189,661 190,656 191,652 193,652 194,650 195,643 197,641 199,633 200,626 201,622 202,638 203,646 204,641 205,638 207,643 208,640 209,634 210,629 212,624 213,632 214,633 215,639 216,638 218,630 220,622 222,619 223,623 224,652 225,661 226,670 228,675 230,667 231,666 232,663 233,662 234,665 235,663 236,659 238,655 239,651 240,655 241,657 243,649 244,649 245,646 246,641');

const vroc = pane('vroc', 701);
grid(vroc, '#a00000', [730]);
grid(vroc, '#e00000', [796]);
line(vroc, WHITE, '0,795 4,796 25,796 27,795 28,793 29,787 30,792 31,794 33,796 37,796 39,795 40,793 41,783 42,786 43,780 45,777 46,787 47,749 48,774 49,786 50,792 52,795 53,796 79,796 80,795 81,790 82,790 84,794 85,793 87,795 89,793 91,792 92,783 94,785 95,788 96,793 97,791 99,790 101,795 104,796 129,796 130,792 131,792 132,794 134,793 135,785 136,792 138,793 140,793 141,790 143,779 144,785 145,782 146,784 147,795 153,795 155,796 178,796 180,795 181,793 182,775 183,789 185,790 186,786 187,793 189,795 190,793 193,795 195,791 196,788 197,782 198,787 199,783 200,789 201,758 202,788 203,791 205,793 206,795 209,796 231,796 233,795 234,717 235,779 236,794 238,795 243,795 246,792');

const rsi = pane('rsi', 800);
grid(rsi, '#c80000', [816, 832, 856, 880, 895]);
const rsiData = '0,857 1,855 2,855 3,848 5,844 7,844 8,838 12,834 13,839 14,840 15,846 16,843 17,848 18,860 19,861 21,856 22,860 23,857 24,854 26,857 27,854 28,856 30,856 32,849 34,851 37,846 38,858 39,861 40,871 41,865 42,867 43,861 44,861 45,856 46,853 47,853 49,857 50,851 52,846 53,852 54,850 55,852 56,846 58,842 60,840 61,834 62,834 63,841 64,839 66,838 68,835 69,868 70,866 72,871 74,872 75,874 76,870 78,868 79,870 80,868 82,860 84,858 85,863 86,857 87,855 89,858 91,859 93,847 94,850 95,850 96,847 97,851 98,850 99,846 100,852 102,852 103,848 104,842 105,846 107,846 108,849 110,863 111,858 112,858 113,861 115,853 116,859 118,860 119,863 120,874 123,873 124,869 127,864 128,859 131,859 133,856 134,860 135,860 136,855 137,852 138,858 139,853 140,852 141,860 142,862 143,867 144,857 146,859 147,857 148,853 149,853 151,847 154,844 155,847 156,847 157,843 161,838 163,842 165,841 167,855 168,860 169,860 170,858 171,869 172,870 174,864 177,851 178,849 179,839 180,833 182,832 183,830 184,838 185,841 187,841 190,832 193,831 195,825 196,829 200,823 201,826 202,848 203,853 204,849 205,846 206,852 208,851 209,845 211,841 212,840 213,850 214,851 215,857 216,855 219,845 220,845 222,842 223,848 224,868 226,874 228,875 230,867 231,867 232,864 233,864 234,867 235,862 237,858 239,854 241,860 242,855 243,852 244,851 246,845';
line(rsi, '#ff00ff', rsiData);
line(rsi, '#ff6464', rsiData, { 'stroke-dasharray': '2 2' });

const dma = pane('dma', 899);
grid(dma, '#c80000', [962]);
line(dma, WHITE, '0,954 2,954 6,949 7,949 12,935 14,934 17,932 19,938 23,948 26,954 28,956 30,956 36,953 40,954 42,960 46,966 49,969 51,967 54,963 57,960 59,955 60,953 63,946 66,938 68,935 70,940 73,952 75,963 78,981 81,984 84,982 87,977 91,973 94,971 96,968 98,967 100,963 103,961 105,960 107,958 109,956 112,955 114,957 118,958 120,961 123,968 125,974 127,978 129,979 131,977 132,975 136,971 140,969 149,969 152,966 154,962 157,957 160,954 163,951 166,949 169,951 171,955 174,959 177,962 179,961 181,956 184,948 188,941 191,937 193,936 195,932 197,928 199,923 201,916 205,916 207,918 209,922 211,926 213,924 215,927 218,927 220,928 221,930 223,932 225,940 227,954 229,969 231,984 233,998 235,999 237,996 239,989 241,985 243,983 244,979 246,972');
line(dma, YELLOW, '0,946 3,950 6,952 8,952 11,948 15,940 18,936 21,935 24,940 26,943 29,949 32,953 36,955 41,954 44,956 47,960 50,965 52,966 54,966 58,964 61,959 65,951 67,945 70,941 74,942 76,947 79,960 82,973 85,980 87,981 89,980 94,974 100,969 105,963 110,959 115,957 119,957 122,959 125,964 127,969 130,974 132,975 134,977 137,975 141,972 145,970 151,969 154,967 158,963 161,959 165,955 168,951 172,951 175,955 178,958 182,959 185,957 188,951 191,944 194,940 199,932 201,928 203,924 205,921 207,918 210,918 212,920 216,924 220,926 224,929 227,936 229,943 231,953 233,966 235,978 237,988 239,992 241,993 243,991 244,989 246,984');

const dates = pane('dates', 1003);
[[80, '201706'], [147, '09'], [219, '12'], [284, '201803'], [351, '05'], [429, '08'], [501, '11'], [566, '201902'], [657, '05'], [728, '08'], [806, '11'], [872, '202002'], [962, '05'], [1040, '08'], [1119, '11'], [1185, '202102'], [1274, '05'], [1352, '08'], [1431, '11'], [1497, '202202']]
  .forEach(([x, t]) => add(dates, 'text', { x, y: 1014 }, t));
```
